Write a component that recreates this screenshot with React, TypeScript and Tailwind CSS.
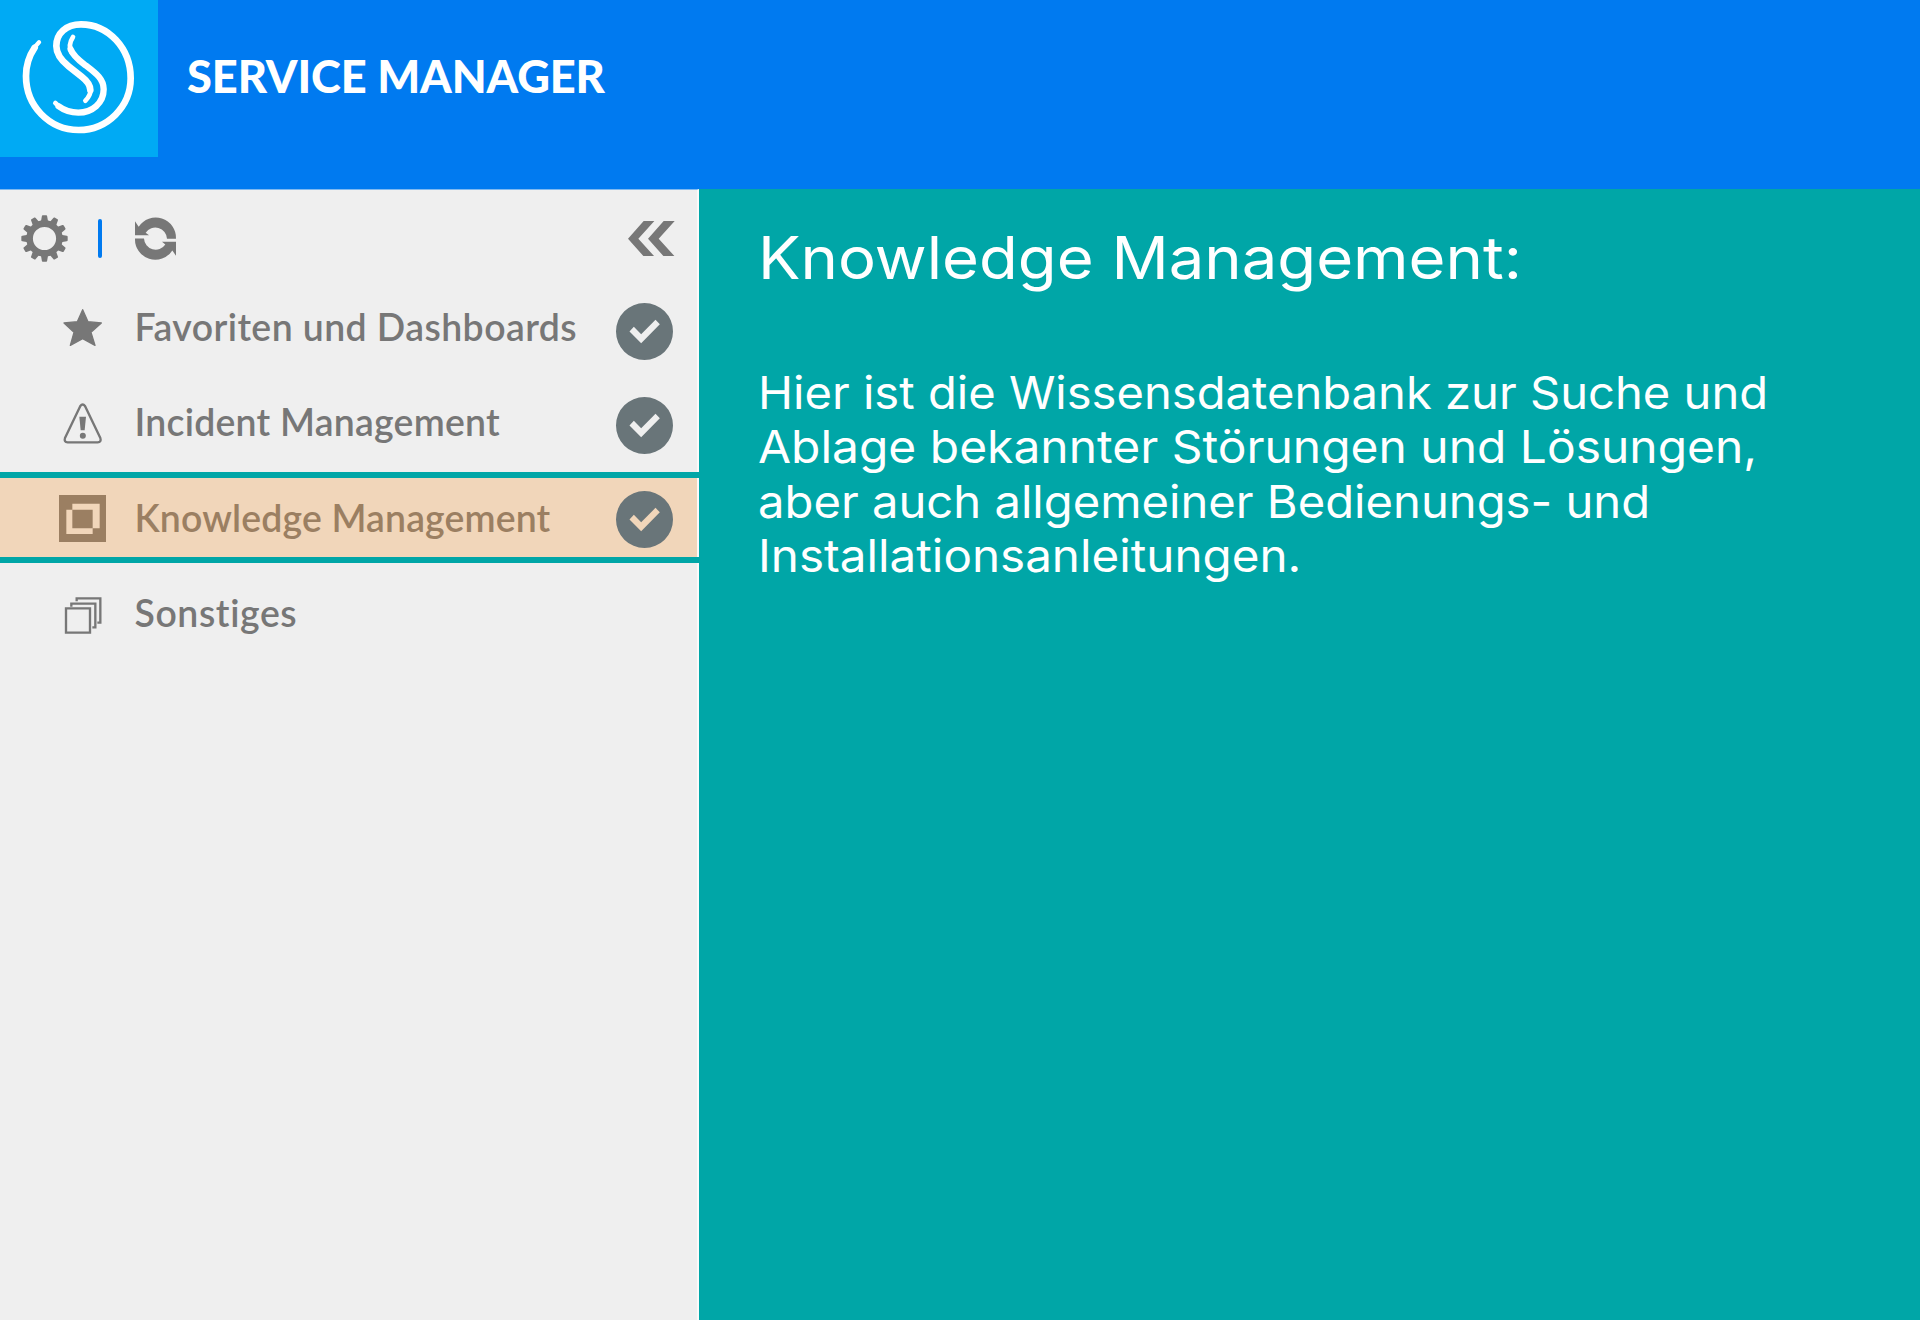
import type { ReactNode } from "react";

function Logo() {
  return (
    <svg viewBox="0 0 474 471" className="h-[157px] w-[158px] shrink-0 bg-[#00aaf4]" fill="none" stroke="#fff" strokeLinecap="round">
      <path
        strokeWidth="20"
        d="M104 143C87 168 78 196 78 228C78 318 148 390 236 390C322 390 392 320 392 235C392 145 325 73 243 73C198 73 169 100 169 138C169 163 182 180 206 199L245 230C264 245 271 257 271 270"
      />
      <path strokeWidth="13" d="M117 127Q108 136 101 148" />
      <path strokeWidth="14" d="M272 268C272 282 267 292 256 302" />
      <path strokeWidth="14" d="M219 111C208 128 207 142 214 156" />
      <path strokeWidth="19" d="M212 148C219 167 237 181 254 194C288 220 311 236 311 268C311 309 277 338 235 338C212 338 192 331 176 319" />
      <path strokeWidth="14" d="M178 320L166 309" />
    </svg>
  );
}

function GearIcon() {
  const angles = [0, 30, 60, 90, 120, 150, 180, 210, 240, 270, 300, 330];
  return (
    <svg viewBox="-71 -71 142 142" className="size-[47px] shrink-0" fill="#777">
      <circle r="45" fill="none" stroke="#777" strokeWidth="20" />
      {angles.map((a) => (
        <path key={a} d="M-11 -50L-8 -67Q-8 -70 -5 -70H5Q8 -70 8 -67L11 -50Z" transform={`rotate(${a})`} />
      ))}
    </svg>
  );
}

function RefreshIcon() {
  const half = "M405 125L416 141A61 61 0 0 1 528 177H501A35 35 0 0 0 437 159L447 167H405Z";
  return (
    <svg viewBox="405 115 123 123" className="size-[41px] shrink-0 overflow-visible" fill="#777">
      <path d={half} />
      <path d={half} transform="rotate(180 466.5 176.7)" />
    </svg>
  );
}

function CollapseIcon() {
  return (
    <svg viewBox="143 124 140 106" className="h-[35.4px] w-[46.7px] shrink-0" fill="#777">
      <path d="M143 177L190 124H222L174 177L222 230H190Z" />
      <path d="M203 177L250 124H283L235 177L283 230H250Z" />
    </svg>
  );
}

function CheckBadge() {
  return (
    <svg viewBox="108.5 369.5 171 171" className="size-[57px] shrink-0">
      <path
        fill="#697579"
        fillRule="evenodd"
        d="M194 369.500a85.500 85.500 0 1 0 0 171a85.500 85.500 0 1 0 0 -171ZM149 455L162 441L184 463L227 420L240 433L184 490Z"
      />
    </svg>
  );
}

const iconClass = "h-[47px] w-[47px] shrink-0";

function StarIcon() {
  return (
    <svg viewBox="177 42 141 141" className={iconClass} fill="#777" stroke="#777" strokeWidth="4" strokeLinejoin="round">
      <path d="M248 59L264 95L304 99L273 127L285 166L248 146L211 166L222 127L192 99L232 95Z" />
    </svg>
  );
}

function WarningIcon() {
  return (
    <svg viewBox="177 330 141 141" className={iconClass} fill="#777">
      <path
        d="M241 348Q248 339 255 348L301 444Q305 456 293 457H203Q191 456 195 444Z"
        fill="none"
        stroke="#777"
        strokeWidth="7"
        strokeLinejoin="round"
      />
      <path d="M238 380H258L254 421H242Z" />
      <circle cx="248.500" cy="437" r="9" />
    </svg>
  );
}

function KnowledgeIcon() {
  return (
    <svg viewBox="177 106 141 141" className={iconClass}>
      <path fill="#9b7f62" d="M177 106H318V247H177Z" />
      <path fill="#f1d6ba" d="M217 132H299V206H278V150H217ZM199 150H217V206H278V223H199Z" />
    </svg>
  );
}

function StackIcon() {
  return (
    <svg viewBox="177 394 141 141" className={iconClass} fill="none" stroke="#777" strokeWidth="7">
      <path d="M198 443H270V516H198Z" />
      <path d="M214 438V429H286V500H277" />
      <path d="M230 422V413H301V486H292" />
    </svg>
  );
}

type ItemProps = { icon: ReactNode; label: string; row: string; text: string; iconShift: string; check?: string };

function NavItem({ icon, label, row, text, iconShift, check }: ItemProps) {
  return (
    <li className={`flex items-center pl-[59px] pr-[24.500px] ${row}`}>
      <span className={iconShift}>{icon}</span>
      <span className={`ml-[28.500px] flex-1 whitespace-nowrap text-[37.4px] leading-[45px] font-semibold ${text}`}>{label}</span>
      {check && (
        <span className={check}>
          <CheckBadge />
        </span>
      )}
    </li>
  );
}

export default function App() {
  return (
    <div className="flex h-[1320px] w-[1920px] flex-col overflow-hidden bg-[#efefef]">
      <header className="flex h-[189px] shrink-0 items-start bg-[#007af0]">
        <Logo />
        <h1 className="mt-[49px] ml-[29px] font-['Lato',sans-serif] text-[45.2px] leading-[54px] font-black tracking-[-0.100px] text-white">
          SERVICE MANAGER
        </h1>
      </header>
      <div className="flex min-h-0 flex-1">
        <aside className="w-[699px] shrink-0 border-t border-r-2 border-t-[#7fb9f0] border-r-[#fafafa] font-['Lato',sans-serif]">
          <div className="flex h-[89px] items-center pt-[8px] pr-[22.500px] pl-[21px]">
            <GearIcon />
            <span className="ml-[30px] h-[38.500px] w-[3.500px] rounded-sm bg-[#007af0]" />
            <span className="ml-[33.500px] flex-1">
              <RefreshIcon />
            </span>
            <CollapseIcon />
          </div>
          <ul>
            <NavItem icon={<StarIcon />} label="Favoriten und Dashboards" row="h-[95px]" text="text-[#777] tracking-[0.43px]" iconShift="mt-[2px]" check="mt-[10px]" />
            <NavItem icon={<WarningIcon />} label="Incident Management" row="h-[94px]" text="text-[#777] tracking-[0.24px]" iconShift="mt-[5px]" check="mt-[9px]" />
            <NavItem
              icon={<KnowledgeIcon />}
              label="Knowledge Management"
              row="mt-[4px] -mr-[2px] h-[90.500px] border-y-6 border-[#00a6a7] bg-[#f1d6ba] pr-[26.500px]! shadow-[inset_-2px_0_0_#fafafa]"
              text="text-[#9b7f62] tracking-[0.15px]"
              iconShift="mt-[2px]"
              check="mt-[4px]"
            />
            <NavItem icon={<StackIcon />} label="Sonstiges" row="h-[98px]" text="text-[#777] tracking-[0.6px] mt-[1px]" iconShift="mt-[7px]" />
          </ul>
        </aside>
        <main className="flex-1 bg-[#00a6a7] pt-[32.500px] pl-[59px] font-['Inter',sans-serif] text-white">
          <h2 className="origin-left scale-x-[1.074] text-[59px] leading-[72px] whitespace-nowrap">Knowledge Management:</h2>
          <p className="mt-[72px] text-[45.2px] leading-[54.500px] whitespace-nowrap">
            <span className="block origin-left scale-x-[1.043]">Hier ist die Wissensdatenbank zur Suche und</span>
            <span className="block origin-left scale-x-[1.061]">Ablage bekannter Störungen und Lösungen,</span>
            <span className="block origin-left scale-x-[1.044]">aber auch allgemeiner Bedienungs- und</span>
            <span className="block origin-left scale-x-[1.053]">Installationsanleitungen.</span>
          </p>
        </main>
      </div>
    </div>
  );
}
